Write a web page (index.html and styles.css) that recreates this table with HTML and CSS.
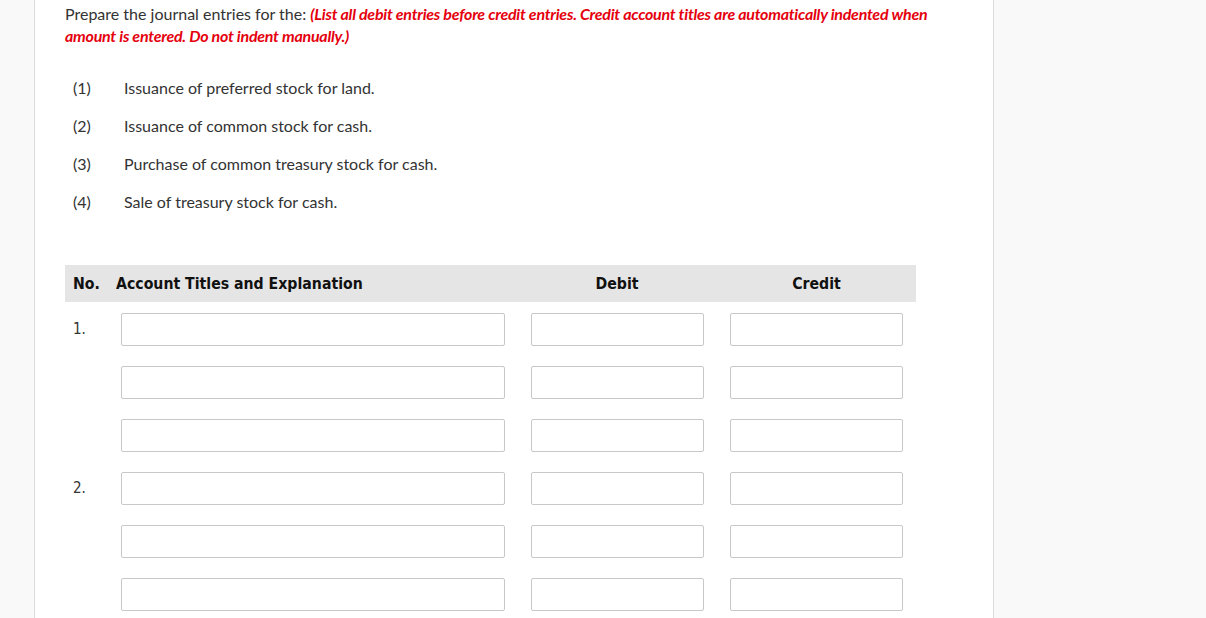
FILE: index.html
```html
<!DOCTYPE html>
<html>
<head>
<meta charset="utf-8">
<link rel="stylesheet" href="styles.css">
</head>
<body>
<div class="page">
  <div class="panel">
    <p class="intro">Prepare the journal entries for the: <em class="note">(List all debit entries before credit entries. Credit account titles are automatically indented when amount is entered. Do not indent manually.)</em></p>
    <ol class="items">
      <li><span class="num">(1)</span><span>Issuance of preferred stock for land.</span></li>
      <li><span class="num">(2)</span><span>Issuance of common stock for cash.</span></li>
      <li><span class="num">(3)</span><span>Purchase of common treasury stock for cash.</span></li>
      <li><span class="num">(4)</span><span>Sale of treasury stock for cash.</span></li>
    </ol>
    <div class="journal">
      <div class="head">
        <div class="h-no">No.</div>
        <div class="h-acct">Account Titles and Explanation</div>
        <div class="h-amt">Debit</div>
        <div class="h-amt">Credit</div>
      </div>
      <div class="row"><div class="no">1.</div><div class="c-acct"><input class="in acct" type="text"></div><div class="c-amt"><input class="in amt" type="text"></div><div class="c-amt"><input class="in amt" type="text"></div></div>
      <div class="row"><div class="no"></div><div class="c-acct"><input class="in acct" type="text"></div><div class="c-amt"><input class="in amt" type="text"></div><div class="c-amt"><input class="in amt" type="text"></div></div>
      <div class="row"><div class="no"></div><div class="c-acct"><input class="in acct" type="text"></div><div class="c-amt"><input class="in amt" type="text"></div><div class="c-amt"><input class="in amt" type="text"></div></div>
      <div class="row"><div class="no">2.</div><div class="c-acct"><input class="in acct" type="text"></div><div class="c-amt"><input class="in amt" type="text"></div><div class="c-amt"><input class="in amt" type="text"></div></div>
      <div class="row"><div class="no"></div><div class="c-acct"><input class="in acct" type="text"></div><div class="c-amt"><input class="in amt" type="text"></div><div class="c-amt"><input class="in amt" type="text"></div></div>
      <div class="row"><div class="no"></div><div class="c-acct"><input class="in acct" type="text"></div><div class="c-amt"><input class="in amt" type="text"></div><div class="c-amt"><input class="in amt" type="text"></div></div>
    </div>
  </div>
</div>
</body>
</html>
```
FILE: styles.css
```css
html, body {
  margin: 0;
  padding: 0;
  height: 100%;
  overflow: hidden;
  background: #f9f9f9;
}
.page {
  padding-left: 34px;
  height: 100%;
}
.panel {
  width: 960px;
  height: 100%;
  box-sizing: border-box;
  background: #fff;
  border-left: 1px solid #dcdcdc;
  border-right: 1px solid #dcdcdc;
  padding: 3px 0 0 30px;
}
.intro {
  margin: 0;
  font-family: Lato, "Liberation Sans", sans-serif;
  font-size: 16px;
  line-height: 22px;
  color: #333;
  width: 880px;
}
.note {
  color: #e5000d;
  font-weight: bold;
  font-style: italic;
  letter-spacing: -0.25px;
}
.items {
  list-style: none;
  margin: 30px 0 0;
  padding: 0 0 0 8px;
  font-family: Lato, "Liberation Sans", sans-serif;
  font-size: 16px;
  color: #333;
}
.items li {
  display: flex;
  height: 38px;
  line-height: 22px;
}
.items .num {
  width: 51px;
}
.journal {
  margin-top: 36px;
  width: 851px;
}
.head, .row {
  display: grid;
  grid-template-columns: 51px 401px 200px 199px;
}
.head {
  background: #e5e5e5;
  height: 37px;
  align-items: center;
  font-family: "DejaVu Sans Condensed", "DejaVu Sans", sans-serif;
  font-weight: bold;
  font-size: 15.7px;
  color: #111;
}
.h-no { padding-left: 8px; }
.h-amt { text-align: center; }
.row {
  height: 53px;
  align-items: start;
}
.head + .row { margin-top: 11px; }
.no {
  font-family: "DejaVu Sans Condensed", "DejaVu Sans", sans-serif;
  font-size: 15px;
  color: #333;
  padding-left: 8px;
  line-height: 33px;
}
.c-acct { padding-left: 5px; }
.c-amt { display: flex; justify-content: center; }
.in {
  box-sizing: border-box;
  height: 33px;
  border: 1px solid #c8c8c8;
  border-radius: 2px;
  background: #fff;
  margin: 0;
  padding: 0 6px;
}
.acct { width: 384px; }
.amt { width: 173px; }
```
